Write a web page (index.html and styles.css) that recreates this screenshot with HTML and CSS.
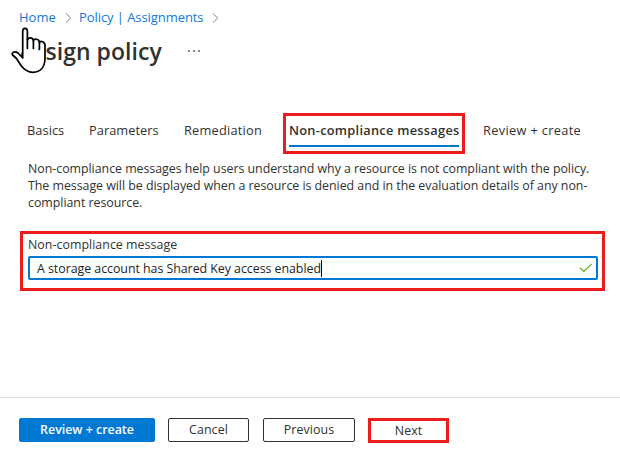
FILE: index.html
```html
<!DOCTYPE html>
<html lang="en">
<head>
<meta charset="utf-8">
<title>Assign policy</title>
<link rel="stylesheet" href="styles.css">
</head>
<body>
<header class="head">
  <nav class="crumbs">
    <a class="crumb home">Home</a>
    <svg class="chev" width="7" height="10" viewBox="0 0 7 10"><path d="M1 .5 5.8 5 1 9.5"/></svg>
    <a class="crumb trail">Policy | Assignments</a>
    <svg class="chev" width="7" height="10" viewBox="0 0 7 10"><path d="M1 .5 5.8 5 1 9.5"/></svg>
  </nav>
  <div class="title-row">
    <h1 class="title">Assign policy</h1>
    <span class="more"><i></i><i></i><i></i></span>
  </div>
  <svg class="hand" width="38" height="48" viewBox="0 0 38 48">
    <path d="M12.7 31V4.6C12.7 .3 17.4 .3 17.4 4.6V13C18.4 9.8 23.2 10.3 23.4 13.8C24.4 11.2 29.2 11.8 29.4 15.5C30.5 13.2 35 14.8 35 18.5V31C35 40 30.5 45.3 23 45.3C17 45.3 14 42.5 11 38.5L6.5 31.5L2.6 28C.8 25.4 5 23.8 8 26L12.7 31Z"/>
    <path d="M17.4 12V21.5M23.4 13.5V21.5M29.4 15V22.5"/>
  </svg>
</header>
<main>
  <div class="tabs">
    <a class="tab t1">Basics</a>
    <a class="tab t2">Parameters</a>
    <a class="tab t3">Remediation</a>
    <div class="mark tab-mark"><a class="tab active">Non-compliance messages</a></div>
    <a class="tab t5">Review + create</a>
  </div>
  <p class="desc">Non-compliance messages help users understand why a resource is not compliant with the policy.<br>The message will be displayed when a resource is denied and in the evaluation details of any non-<br>compliant resource.</p>
  <section class="mark field">
    <label class="label">Non-compliance message</label>
    <div class="input"><span class="value">A storage account has Shared Key access enabled</span><span class="caret"></span>
      <svg class="check" width="14" height="10" viewBox="0 0 14 10"><path d="M1 4.8 4.8 8.5 12.7 .9"/></svg>
    </div>
  </section>
</main>
<footer class="foot">
  <button class="btn primary">Review + create</button>
  <button class="btn cancel">Cancel</button>
  <button class="btn prev">Previous</button>
  <button class="btn mark next">Next</button>
</footer>
</body>
</html>
```
FILE: styles.css
```css
* { box-sizing: border-box; }
body {
  margin: 0;
  width: 620px;
  height: 457px;
  display: flex;
  flex-direction: column;
  background: #fff;
  color: #323130;
  font: 12.4px/17px "Open Sans", "Noto Sans", sans-serif;
  white-space: nowrap;
  overflow: hidden;
}
.mark { border: 3px solid #eb1c1c; }
.head { position: relative; height: 113px; padding: 8px 0 0 19px; }
.crumbs { display: flex; align-items: center; height: 19px; color: #0f7bd6; }
.crumb { font-size: 13px; }
.home { width: 46px; }
.trail { width: 133px; margin-left: 7px; letter-spacing: -.07px; }
.chev { fill: none; stroke: #8a8886; stroke-width: 1; }
.title-row { display: flex; height: 48px; align-items: center; }
.title { margin: -1px 0 0; width: 169px; font-size: 23px; line-height: 32px; font-weight: 600; letter-spacing: .04px; }
.more { display: flex; gap: 3px; }
.more i { width: 2px; height: 2px; background: #8a8886; }
.hand { position: absolute; left: 10px; top: 27px; fill: #fff; stroke: #000; stroke-width: 1.7; stroke-linejoin: round; stroke-linecap: round; }
.tabs { display: flex; height: 41px; padding-left: 27px; }
.tab { font-size: 12.8px; line-height: 18px; margin-top: 8px; letter-spacing: .05px; }
.t1 { width: 62px; }
.t2 { width: 95px; }
.t3 { width: 99px; letter-spacing: .22px; }
.tab-mark { width: 182px; height: 41px; padding: 5px 3px 0; }
.active { display: block; margin: 0; height: 26px; font-weight: 600; letter-spacing: .27px; border-bottom: 2px solid #0078d4; }
.t5 { margin-left: 18px; letter-spacing: .33px; }
.desc { margin: 6px 0 0 28px; height: 71px; letter-spacing: -.035px; }
.field { margin-left: 20px; width: 585px; height: 60px; padding: 3px 4px 0 5px; }
.label { display: block; height: 19px; line-height: 16px; letter-spacing: .03px; }
.input { display: flex; align-items: center; height: 24px; width: 570px; padding: 0 3px 0 7px; border: 2px solid #0078d4; border-radius: 2px; color: #201f1e; }
.value { letter-spacing: -.04px; }
.caret { width: 1px; height: 17px; background: #000; }
.check { margin-left: auto; fill: none; stroke: #6bb130; stroke-width: 1.3; }
.foot { display: flex; height: 60px; margin-top: auto; padding: 20px 0 0 19px; border-top: 1px solid #dddddd; }
.btn { height: 24px; padding: 0 0 1px; border: 1px solid #323130; border-radius: 2px; background: #fff; color: #323130; font: 500 12.4px/20px "Open Sans", "Noto Sans", sans-serif; letter-spacing: .1px; }
.primary { width: 136px; border-color: #0078d4; background: #0078d4; color: #fff; font-weight: 600; letter-spacing: 0; }
.cancel { width: 81px; margin-left: 13px; }
.prev { width: 92px; margin-left: 14px; }
.next { width: 81px; height: 25px; margin-left: 13px; padding-bottom: 3px; border: 3px solid #eb1c1c; border-radius: 0; }
```
